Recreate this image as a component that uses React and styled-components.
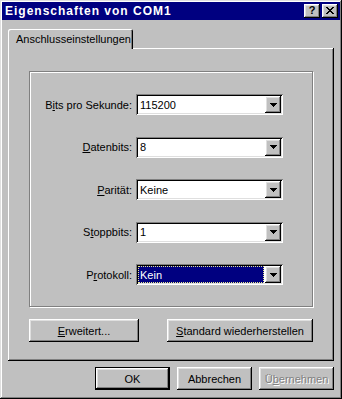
import styled, { createGlobalStyle } from "styled-components";

const GlobalStyle = createGlobalStyle`
  html, body {
    margin: 0;
    padding: 0;
    background: #c0c0c0;
  }
  * {
    box-sizing: border-box;
  }
`;

const raised = `
  box-shadow: inset -1px -1px #000, inset 1px 1px #fff,
    inset -2px -2px #808080, inset 2px 2px #dfdfdf;
`;

const sunken = `
  box-shadow: inset 1px 1px #808080, inset -1px -1px #fff,
    inset 2px 2px #000, inset -2px -2px #dfdfdf;
`;

const fields = [
  { label: ["B", "i", "ts pro Sekunde:"], value: "115200" },
  { label: ["", "D", "atenbits:"], value: "8" },
  { label: ["", "P", "arität:"], value: "Keine" },
  { label: ["S", "t", "oppbits:"], value: "1" },
  { label: ["P", "r", "otokoll:"], value: "Kein", focused: true },
];

const App = () => {
  return (
    <>
      <GlobalStyle />
      <Window>
        <TitleBar>
          <Title>Eigenschaften von COM1</Title>
          <TitleButtons>
            <TitleButton>
              <HelpGlyph>?</HelpGlyph>
            </TitleButton>
            <TitleButton>
              <svg width="8" height="7" viewBox="0 0 8 7">
                <path
                  d="M0 0h2v1h1v1h2v-1h1v-1h2v1h-1v1h-1v1h-1v1h1v1h1v1h1v1h-2v-1h-1v-1h-2v1h-1v1h-2v-1h1v-1h1v-1h1v-1h-1v-1h-1v-1h-1z"
                  fill="#000"
                />
              </svg>
            </TitleButton>
          </TitleButtons>
        </TitleBar>
        <Body>
          <TabStrip>
            <Tab>Anschlusseinstellungen</Tab>
          </TabStrip>
          <Panel>
            <GroupBox>
              {fields.map((f) => (
                <FieldRow key={f.value + f.label[2]}>
                  <Label>
                    {f.label[0]}
                    <u>{f.label[1]}</u>
                    {f.label[2]}
                  </Label>
                  <Combo>
                    <ComboValue $focused={f.focused}>{f.value}</ComboValue>
                    <ArrowButton>
                      <svg width="7" height="4" viewBox="0 0 7 4">
                        <path d="M0 0h7v1h-1v1h-1v1h-1v1h-1v-1h-1v-1h-1v-1h-1z" fill="#000" />
                      </svg>
                    </ArrowButton>
                  </Combo>
                </FieldRow>
              ))}
            </GroupBox>
            <PanelButtons>
              <Button $width={110}>
                <u>E</u>rweitert...
              </Button>
              <Button $width={146}>
                <u>S</u>tandard wiederherstellen
              </Button>
            </PanelButtons>
          </Panel>
          <DialogButtons>
            <Button $width={75} $default>
              OK
            </Button>
            <Button $width={75}>Abbrechen</Button>
            <Button $width={75} $disabled>
              Ü<u>b</u>ernehmen
            </Button>
          </DialogButtons>
        </Body>
      </Window>
    </>
  );
};

export default App;

const Window = styled.div`
  width: 342px;
  height: 399px;
  padding: 2px;
  background: #c0c0c0;
  box-shadow: inset -1px -1px #000, inset 1px 1px #dfdfdf,
    inset -2px -2px #808080, inset 2px 2px #fff;
  font-family: "Liberation Sans", Arial, sans-serif;
  font-size: 11px;
  color: #000;
  display: flex;
  flex-direction: column;
`;

const TitleBar = styled.div`
  height: 18px;
  background: #000080;
  display: flex;
  align-items: center;
  justify-content: space-between;
  padding: 0 2px 0 3px;
`;

const Title = styled.span`
  color: #fff;
  font-weight: bold;
  font-size: 12px;
  letter-spacing: 1px;
`;

const TitleButtons = styled.div`
  display: flex;
  gap: 2px;
`;

const TitleButton = styled.div`
  width: 16px;
  height: 14px;
  background: #c0c0c0;
  ${raised}
  display: flex;
  align-items: center;
  justify-content: center;
  padding-bottom: 1px;
`;

const HelpGlyph = styled.span`
  font-weight: bold;
  font-size: 11px;
  line-height: 1;
`;

const Body = styled.div`
  padding: 9px 6px 0 6px;
  display: flex;
  flex-direction: column;
`;

const TabStrip = styled.div`
  display: flex;
  height: 19px;
`;

const Tab = styled.div`
  position: relative;
  z-index: 1;
  width: 125px;
  height: 20px;
  background: #c0c0c0;
  border-radius: 2px 2px 0 0;
  box-shadow: inset 1px 1px #fff, inset -1px 0 #000, inset -2px 0 #808080;
  padding: 4px 0 0 8px;
`;

const Panel = styled.div`
  height: 313px;
  background: #c0c0c0;
  box-shadow: inset -1px -1px #000, inset 1px 1px #fff,
    inset -2px -2px #808080;
  padding: 23px 21px 0 21px;
  display: flex;
  flex-direction: column;
`;

const GroupBox = styled.div`
  border: 1px solid #808080;
  box-shadow: inset 1px 1px #fff, 1px 1px #fff;
  padding: 22px 29px 21px 0;
  display: flex;
  flex-direction: column;
  gap: 21.5px;
`;

const FieldRow = styled.div`
  display: grid;
  grid-template-columns: 1fr 147px;
  column-gap: 4px;
  align-items: center;
  height: 21px;
`;

const Label = styled.span`
  text-align: right;
`;

const Combo = styled.div`
  height: 21px;
  background: #fff;
  ${sunken}
  padding: 2px;
  display: flex;
  align-items: stretch;
`;

const ComboValue = styled.span`
  flex: 1;
  display: flex;
  align-items: center;
  padding-left: 2px;
  margin-right: 1px;
  background: ${({ $focused }) => ($focused ? "#000080" : "transparent")};
  color: ${({ $focused }) => ($focused ? "#fff" : "#000")};
  outline: ${({ $focused }) => ($focused ? "1px dotted #e8e890" : "none")};
  outline-offset: -1px;
`;

const ArrowButton = styled.span`
  width: 16px;
  background: #c0c0c0;
  ${raised}
  display: flex;
  align-items: center;
  justify-content: center;
`;

const PanelButtons = styled.div`
  margin-top: 12px;
  display: flex;
  justify-content: space-between;
`;

const Button = styled.div`
  width: ${({ $width }) => $width}px;
  height: 23px;
  background: #c0c0c0;
  ${raised}
  display: flex;
  align-items: center;
  justify-content: center;
  color: ${({ $disabled }) => ($disabled ? "#808080" : "#000")};
  text-shadow: ${({ $disabled }) => ($disabled ? "1px 1px #fff" : "none")};
  border: ${({ $default }) => ($default ? "1px solid #000" : "none")};
`;

const DialogButtons = styled.div`
  margin-top: 6px;
  display: flex;
  justify-content: flex-end;
  gap: 7px;
`;
